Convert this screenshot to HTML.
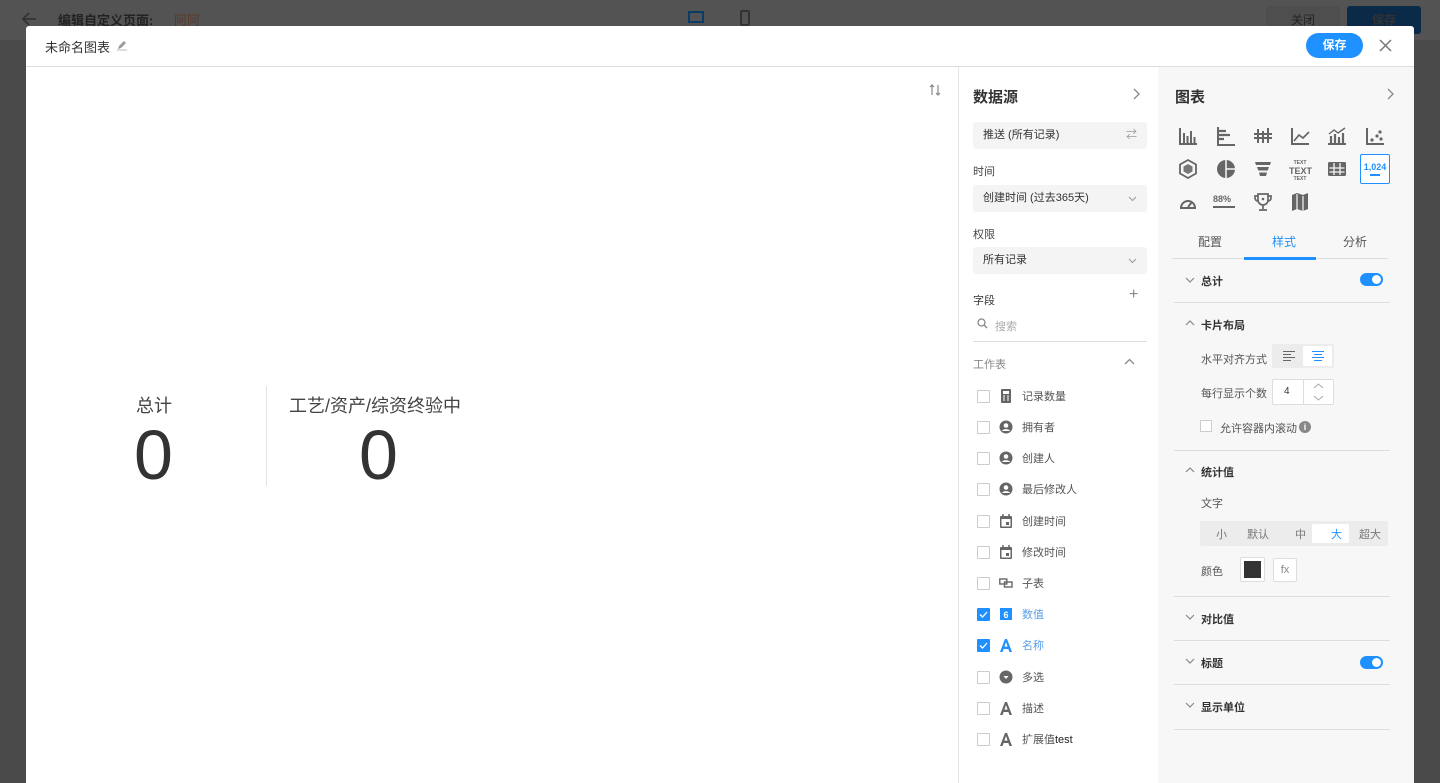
<!DOCTYPE html>
<html><head><meta charset="utf-8"><style>
*{box-sizing:border-box;margin:0;padding:0}
body{width:1440px;height:783px;overflow:hidden;background:#4a4a4a;font-family:"Liberation Sans","Noto Sans CJK SC",sans-serif;position:relative;color:#333}
.topbar{position:absolute;left:0;top:0;width:1440px;height:40px;background:#535353}
.abs{position:absolute}
.modal{position:absolute;left:26px;top:26px;width:1388px;height:757px;background:#fff;border-radius:3px 3px 0 0}
.hdr{position:absolute;left:0;top:0;width:1388px;height:41px;border-bottom:1px solid #ddd}
.ds{position:absolute;left:932px;top:41px;width:200px;height:716px;border-left:1px solid #e6e6e6;background:#fff}
.rp{position:absolute;left:1132px;top:41px;width:256px;height:716px;background:#f7f7f7}
.sel{position:absolute;left:14px;width:174px;height:27px;background:#f4f4f4;border-radius:3px;font-size:11px;line-height:27px;padding-left:10px;color:#333}
.lbl{position:absolute;left:14px;font-size:11px;color:#444}
.row{position:absolute;left:18px;height:16px;font-size:11px;color:#555;line-height:14px}
.cb{position:absolute;left:0;top:0;width:13px;height:13px;border:1px solid #ccc;background:#fff;border-radius:1px}
.cb.on{background:#1e90ff;border-color:#1e90ff}
.ic{position:absolute;left:22px;top:-1px;width:14px;height:14px}
.tx{position:absolute;left:45px;top:0;white-space:nowrap}
.sec{position:absolute;left:16px;width:216px;border-top:1px solid #ddd}
.st{position:absolute;left:43px;font-size:11px;color:#333;font-weight:bold}
.chev{position:absolute;left:27px;width:10px;height:10px}
.tog{position:absolute;left:202px;width:23px;height:13px;border-radius:7px;background:#1e90ff}
.tog::after{content:"";position:absolute;right:2px;top:2px;width:9px;height:9px;border-radius:50%;background:#fff}
.gi{position:absolute;width:22px;height:22px}
</style></head><body>
<div class="topbar"></div>
<svg class="abs" style="left:20px;top:10px" width="18" height="18" viewBox="0 0 18 18"><path d="M16 9H3M9 3L3 9l6 6" stroke="#333" stroke-width="1.8" fill="none"/></svg>
<div class="abs" style="left:58px;top:10px;font-size:13px;color:#222;font-weight:bold">编辑自定义页面:</div>
<div class="abs" style="left:174px;top:10px;font-size:13px;color:#5a3a2a">阿阿</div>
<div class="abs" style="left:1266px;top:6px;width:74px;height:28px;background:#4e4e4e;border-radius:3px;color:#222;font-size:12px;text-align:center;line-height:28px">关闭</div>
<div class="abs" style="left:1347px;top:6px;width:74px;height:28px;background:#0b2a48;border-radius:3px;color:#333;font-size:12px;text-align:center;line-height:28px;font-weight:bold">保存</div>
<div class="abs" style="left:688px;top:11px;width:16px;height:12px;border:2px solid #0a3a66"></div>
<div class="abs" style="left:740px;top:10px;width:10px;height:16px;border:2px solid #333;border-radius:2px"></div>

<div class="modal">
 <div class="hdr">
  <div class="abs" style="left:19px;top:11px;font-size:13px;color:#333">未命名图表</div>
  <svg class="abs" style="left:90px;top:13px" width="12" height="12" viewBox="0 0 12 12"><path d="M2 10l1-3 5-5 2 2-5 5z" fill="#999"/><path d="M1 11h10" stroke="#bbb"/></svg>
  <div class="abs" style="left:1280px;top:7px;width:57px;height:25px;border-radius:13px;background:#1e90ff;color:#fff;font-size:12px;font-weight:bold;text-align:center;line-height:25px">保存</div>
  <svg class="abs" style="left:1353px;top:13px" width="13" height="13" viewBox="0 0 13 13"><path d="M1 1l11 11M12 1L1 12" stroke="#777" stroke-width="1.5"/></svg>
 </div>
 <svg class="abs" style="left:903px;top:57px" width="12" height="14" viewBox="0 0 12 14"><path d="M3 12V2M1 4l2-2 2 2M9 2v10M7 10l2 2 2-2" stroke="#888" stroke-width="1.2" fill="none"/></svg>
 <div class="abs" style="left:110px;top:366px;font-size:18px;color:#444">总计</div>
 <div class="abs" style="left:108px;top:384px;font-size:70px;color:#333;line-height:90px;font-weight:300">0</div>
 <div class="abs" style="left:240px;top:360px;width:1px;height:100px;background:#e2e2e2"></div>
 <div class="abs" style="left:263px;top:366px;font-size:18px;color:#444">工艺/资产/综资终验中</div>
 <div class="abs" style="left:333px;top:384px;font-size:70px;color:#333;line-height:90px">0</div>

 <div class="ds">
  <div class="abs" style="left:14px;top:19px;font-size:15px;color:#333;font-weight:bold">数据源</div>
  <svg class="abs" style="left:174px;top:21px" width="8" height="12" viewBox="0 0 8 12"><path d="M1 1l5 5-5 5" stroke="#888" stroke-width="1.3" fill="none"/></svg>
  <div class="sel" style="top:55px">推送 (所有记录)<span style="position:absolute;right:10px;color:#999">⇄</span></div>
  <div class="lbl" style="top:96px">时间</div>
  <div class="sel" style="top:118px">创建时间 (过去365天)<svg style="position:absolute;right:10px;top:11px" width="9" height="6" viewBox="0 0 9 6"><path d="M1 1l3.5 3.5L8 1" stroke="#999" fill="none"/></svg></div>
  <div class="lbl" style="top:159px">权限</div>
  <div class="sel" style="top:180px">所有记录<svg style="position:absolute;right:10px;top:11px" width="9" height="6" viewBox="0 0 9 6"><path d="M1 1l3.5 3.5L8 1" stroke="#999" fill="none"/></svg></div>
  <div class="lbl" style="top:225px;color:#333">字段</div>
  <div class="abs" style="left:170px;top:219px;font-size:16px;color:#888">+</div>
  <svg class="abs" style="left:18px;top:251px" width="11" height="11" viewBox="0 0 11 11"><circle cx="4.5" cy="4.5" r="3.5" stroke="#888" fill="none" stroke-width="1.3"/><path d="M7 7l3 3" stroke="#888" stroke-width="1.4"/></svg>
  <div class="abs" style="left:36px;top:251px;font-size:11px;color:#aaa">搜索</div>
  <div class="abs" style="left:14px;top:274px;width:174px;height:1px;background:#ddd"></div>
  <div class="abs" style="left:14px;top:289px;font-size:11px;color:#888">工作表</div>
  <svg class="abs" style="left:165px;top:291px" width="11" height="7" viewBox="0 0 11 7"><path d="M1 6l4.5-4.5L10 6" stroke="#888" stroke-width="1.3" fill="none"/></svg>

  <div class="row" style="top:323px"><div class="cb"></div><svg class="ic" viewBox="0 0 14 14"><rect x="2" y="0" width="10" height="14" rx="1" fill="#666"/><rect x="4" y="2" width="6" height="3" fill="#fff"/><path d="M4 7h2M8 7h2M4 9h2M8 9h2M4 11h2M8 11h2" stroke="#fff"/></svg><div class="tx">记录数量</div></div>
  <div class="row" style="top:354px"><div class="cb"></div><svg class="ic" viewBox="0 0 14 14"><circle cx="7" cy="7" r="6.5" fill="#666"/><circle cx="7" cy="5.5" r="2.3" fill="#fff"/><path d="M3 11c1-2.5 7-2.5 8 0" fill="#fff"/></svg><div class="tx">拥有者</div></div>
  <div class="row" style="top:385px"><div class="cb"></div><svg class="ic" viewBox="0 0 14 14"><circle cx="7" cy="7" r="6.5" fill="#666"/><circle cx="7" cy="5.5" r="2.3" fill="#fff"/><path d="M3 11c1-2.5 7-2.5 8 0" fill="#fff"/></svg><div class="tx">创建人</div></div>
  <div class="row" style="top:416px"><div class="cb"></div><svg class="ic" viewBox="0 0 14 14"><circle cx="7" cy="7" r="6.5" fill="#666"/><circle cx="7" cy="5.5" r="2.3" fill="#fff"/><path d="M3 11c1-2.5 7-2.5 8 0" fill="#fff"/></svg><div class="tx">最后修改人</div></div>
  <div class="row" style="top:448px"><div class="cb"></div><svg class="ic" viewBox="0 0 14 14"><rect x="1" y="2" width="12" height="12" rx="1" fill="#666"/><rect x="2.5" y="5" width="9" height="7.5" fill="#fff"/><rect x="7" y="8" width="3" height="3" fill="#666"/><path d="M4 0v3M10 0v3" stroke="#666" stroke-width="1.5"/></svg><div class="tx">创建时间</div></div>
  <div class="row" style="top:479px"><div class="cb"></div><svg class="ic" viewBox="0 0 14 14"><rect x="1" y="2" width="12" height="12" rx="1" fill="#666"/><rect x="2.5" y="5" width="9" height="7.5" fill="#fff"/><rect x="7" y="8" width="3" height="3" fill="#666"/><path d="M4 0v3M10 0v3" stroke="#666" stroke-width="1.5"/></svg><div class="tx">修改时间</div></div>
  <div class="row" style="top:510px"><div class="cb"></div><svg class="ic" viewBox="0 0 14 14"><rect x="0.8" y="3" width="7" height="5" stroke="#666" stroke-width="1.4" fill="none"/><rect x="5.5" y="6" width="7.5" height="5" stroke="#666" stroke-width="1.4" fill="none"/></svg><div class="tx">子表</div></div>
  <div class="row" style="top:541px;color:#5aa0e8"><div class="cb on"><svg width="11" height="11" viewBox="0 0 11 11"><path d="M2 5.5l2.5 2.5L9 3" stroke="#fff" fill="none" stroke-width="1.3"/></svg></div><svg class="ic" viewBox="0 0 14 14"><rect x="1" y="1" width="12" height="12" fill="#1e90ff"/><text x="7" y="11" font-size="9" font-weight="bold" fill="#fff" text-anchor="middle" font-family="Liberation Sans">6</text></svg><div class="tx">数值</div></div>
  <div class="row" style="top:572px;color:#5aa0e8"><div class="cb on"><svg width="11" height="11" viewBox="0 0 11 11"><path d="M2 5.5l2.5 2.5L9 3" stroke="#fff" fill="none" stroke-width="1.3"/></svg></div><svg class="ic" viewBox="0 0 14 14"><path d="M1 14L6 1h2l5 13h-2.6l-1-3H4.6l-1 3zM5.4 8.6h3.2L7 4z" fill="#1e90ff"/></svg><div class="tx">名称</div></div>
  <div class="row" style="top:604px"><div class="cb"></div><svg class="ic" viewBox="0 0 14 14"><circle cx="7" cy="7" r="6.5" fill="#666"/><path d="M4.5 6h5L7 9z" fill="#fff"/></svg><div class="tx">多选</div></div>
  <div class="row" style="top:635px"><div class="cb"></div><svg class="ic" viewBox="0 0 14 14"><path d="M1 14L6 1h2l5 13h-2.6l-1-3H4.6l-1 3zM5.4 8.6h3.2L7 4z" fill="#666"/></svg><div class="tx">描述</div></div>
  <div class="row" style="top:666px"><div class="cb"></div><svg class="ic" viewBox="0 0 14 14"><path d="M1 14L6 1h2l5 13h-2.6l-1-3H4.6l-1 3zM5.4 8.6h3.2L7 4z" fill="#666"/></svg><div class="tx">扩展值<span style="color:#222">test</span></div></div>
 </div>

 <div class="rp">
  <div class="abs" style="left:17px;top:19px;font-size:15px;color:#333;font-weight:bold">图表</div>
  <svg class="abs" style="left:229px;top:21px" width="8" height="12" viewBox="0 0 8 12"><path d="M1 1l5 5-5 5" stroke="#888" stroke-width="1.3" fill="none"/></svg>
  <svg class="gi" style="left:19px;top:58px" viewBox="0 0 22 22"><path d="M3 3v16h17" stroke="#666" stroke-width="2" fill="none"/><path d="M7 8v10M10.5 11v7M14 6v12M17.5 12v6" stroke="#666" stroke-width="2"/></svg>
  <svg class="gi" style="left:57px;top:58px" viewBox="0 0 22 22"><path d="M3 2v18h17" stroke="#666" stroke-width="2" fill="none"/><path d="M3 6h8M3 10h12M3 14h6" stroke="#666" stroke-width="2.2"/></svg>
  <svg class="gi" style="left:94px;top:58px" viewBox="0 0 22 22"><path d="M2 9h18M2 13h18" stroke="#666" stroke-width="2"/><path d="M6 4v14M11 6v12M16 3v15" stroke="#666" stroke-width="2"/></svg>
  <svg class="gi" style="left:131px;top:58px" viewBox="0 0 22 22"><path d="M3 3v16h17" stroke="#666" stroke-width="2" fill="none"/><path d="M5 16l5-6 4 3 6-6" stroke="#666" stroke-width="1.7" fill="none"/></svg>
  <svg class="gi" style="left:168px;top:58px" viewBox="0 0 22 22"><path d="M2 19h18" stroke="#666" stroke-width="2"/><path d="M5 11v7M9 9v9M13 12v6M17 8v10" stroke="#666" stroke-width="2.2"/><path d="M3 9l5-4 4 3 7-5" stroke="#666" stroke-width="1.4" fill="none"/></svg>
  <svg class="gi" style="left:206px;top:58px" viewBox="0 0 22 22"><path d="M3 3v16h17" stroke="#666" stroke-width="2" fill="none"/><circle cx="8" cy="15" r="1.6" fill="#666"/><circle cx="13" cy="11" r="1.6" fill="#666"/><circle cx="17" cy="14" r="1.6" fill="#666"/><circle cx="16" cy="7" r="1.6" fill="#666"/></svg>
  <svg class="gi" style="left:19px;top:91px" viewBox="0 0 22 22"><path d="M11 2l8 4.5v9L11 20l-8-4.5v-9z" stroke="#666" stroke-width="1.8" fill="none"/><path d="M11 6l4.5 2.5v5L11 16l-4.5-2.5v-5z" fill="#777"/></svg>
  <svg class="gi" style="left:57px;top:91px" viewBox="0 0 22 22"><circle cx="11" cy="11" r="9" fill="#666"/><path d="M11 1v20M11 11h10" stroke="#f7f7f7" stroke-width="1.5"/></svg>
  <svg class="gi" style="left:94px;top:91px" viewBox="0 0 22 22"><path d="M3 4h16l-1 3H4zM5 9h12l-1.3 3.5H6.3zM7 14.5h8l-1 3.5H8z" fill="#666"/></svg>
  <div class="abs" style="left:131px;top:93px;width:22px;text-align:center;font-family:'Liberation Sans';font-weight:bold;color:#666;line-height:7px"><div style="font-size:5px">TEXT</div><div style="font-size:9px;line-height:9px">TEXT</div><div style="font-size:5px">TEXT</div></div>
  <svg class="gi" style="left:168px;top:91px" viewBox="0 0 22 22"><rect x="2" y="4" width="18" height="14" rx="1.5" fill="#666"/><path d="M3.5 10h15M3.5 14h15M8 5v12M14 5v12" stroke="#f7f7f7" stroke-width="1.3"/></svg>
  <div class="abs" style="left:202px;top:87px;width:30px;height:30px;border:1px solid #1e90ff;border-radius:2px;background:#fff;text-align:center;color:#1e90ff;font-size:9px;font-weight:bold;padding-top:7px;line-height:10px">1,024<div style="width:10px;height:1.5px;background:#1e90ff;margin:2px auto 0"></div></div>
  <svg class="gi" style="left:19px;top:124px" viewBox="0 0 22 22"><path d="M4 17a7 7 0 1 1 14 0z" stroke="#666" stroke-width="2" fill="none"/><path d="M11 16l4-5" stroke="#666" stroke-width="2"/></svg>
  <div class="abs" style="left:55px;top:128px;width:24px;font-size:9px;font-weight:bold;color:#666;line-height:9px">88%<div style="width:22px;height:1.5px;background:#666;margin-top:2px"></div></div>
  <svg class="gi" style="left:94px;top:124px" viewBox="0 0 22 22"><path d="M6 3h10v6a5 5 0 0 1-10 0zM6 5H3v2a3 3 0 0 0 3 3M16 5h3v2a3 3 0 0 1-3 3M11 14v4M7 19h8" stroke="#666" stroke-width="1.7" fill="none"/><circle cx="11" cy="8" r="1.3" fill="#666"/></svg>
  <svg class="gi" style="left:131px;top:124px" viewBox="0 0 22 22"><path d="M3 4l5-2 6 2 5-2v16l-5 2-6-2-5 2z" fill="#666"/><path d="M8 3v16M14 5v16" stroke="#f7f7f7" stroke-width="1.2"/></svg>

  <div class="abs" style="left:40px;top:166px;font-size:12px;color:#555">配置</div>
  <div class="abs" style="left:114px;top:166px;font-size:12px;color:#1e90ff">样式</div>
  <div class="abs" style="left:185px;top:166px;font-size:12px;color:#555">分析</div>
  <div class="abs" style="left:14px;top:191px;width:216px;height:1px;background:#ddd"></div>
  <div class="abs" style="left:86px;top:190px;width:72px;height:3px;background:#1e90ff"></div>

  <svg class="chev" style="top:208px" viewBox="0 0 10 10"><path d="M1 3l4 4 4-4" stroke="#888" stroke-width="1.2" fill="none"/></svg>
  <div class="st" style="top:206px">总计</div>
  <div class="tog" style="top:206px"></div>
  <div class="sec" style="top:235px"></div>
  <svg class="chev" style="top:251px" viewBox="0 0 10 10"><path d="M1 7l4-4 4 4" stroke="#888" stroke-width="1.2" fill="none"/></svg>
  <div class="st" style="top:250px">卡片布局</div>
  <div class="abs" style="left:43px;top:284px;font-size:11px;color:#555">水平对齐方式</div>
  <div class="abs" style="left:114px;top:277px;width:62px;height:24px;background:#ececec;border-radius:2px"></div>
  <div class="abs" style="left:145px;top:279px;width:29px;height:20px;background:#fff;border-radius:2px"></div>
  <svg class="abs" style="left:125px;top:284px" width="12" height="10" viewBox="0 0 12 10"><path d="M0 .5h12M0 3.5h8M0 6.5h12M0 9.5h8" stroke="#666"/></svg>
  <svg class="abs" style="left:154px;top:284px" width="12" height="10" viewBox="0 0 12 10"><path d="M0 .5h12M2 3.5h8M0 6.5h12M2 9.5h8" stroke="#1e90ff"/></svg>
  <div class="abs" style="left:43px;top:318px;font-size:11px;color:#555">每行显示个数</div>
  <div class="abs" style="left:114px;top:312px;width:62px;height:26px;background:#fff;border:1px solid #ddd;border-radius:2px;font-size:10px;line-height:24px;padding-left:11px">4</div>
  <div class="abs" style="left:145px;top:313px;width:1px;height:24px;background:#ddd"></div>
  <svg class="abs" style="left:155px;top:316px" width="11" height="18" viewBox="0 0 11 18"><path d="M1 5l4.5-4 4.5 4M1 13l4.5 4 4.5-4" stroke="#aaa" fill="none"/></svg>
  <div class="abs" style="left:42px;top:353px;width:12px;height:12px;border:1px solid #ccc;background:#fff"></div>
  <div class="abs" style="left:62px;top:353px;font-size:11px;color:#555">允许容器内滚动</div>
  <div class="abs" style="left:141px;top:354px;width:12px;height:12px;border-radius:50%;background:#888;color:#fff;font-size:9px;text-align:center;line-height:12px;font-weight:bold">i</div>
  <div class="sec" style="top:383px"></div>
  <svg class="chev" style="top:398px" viewBox="0 0 10 10"><path d="M1 7l4-4 4 4" stroke="#888" stroke-width="1.2" fill="none"/></svg>
  <div class="st" style="top:397px">统计值</div>
  <div class="abs" style="left:43px;top:428px;font-size:11px;color:#555">文字</div>
  <div class="abs" style="left:42px;top:454px;width:188px;height:25px;background:#ececec;border-radius:2px"></div>
  <div class="abs" style="left:154px;top:457px;width:37px;height:19px;background:#fff;border-radius:2px"></div>
  <div class="abs" style="left:42px;top:459px;width:188px;font-size:11px;color:#777">
   <span style="position:absolute;left:16px">小</span><span style="position:absolute;left:47px">默认</span><span style="position:absolute;left:95px">中</span><span style="position:absolute;left:131px;color:#1e90ff">大</span><span style="position:absolute;left:159px">超大</span></div>
  <div class="abs" style="left:43px;top:496px;font-size:11px;color:#555">颜色</div>
  <div class="abs" style="left:82px;top:490px;width:25px;height:25px;border:1px solid #ddd;background:#fff;border-radius:2px;padding:3px"><div style="width:17px;height:17px;background:#333"></div></div>
  <div class="abs" style="left:115px;top:491px;width:24px;height:24px;border:1px solid #ddd;background:#fff;border-radius:2px;font-size:11px;color:#888;text-align:center;line-height:22px">fx</div>
  <div class="sec" style="top:529px"></div>
  <svg class="chev" style="top:545px" viewBox="0 0 10 10"><path d="M1 3l4 4 4-4" stroke="#888" stroke-width="1.2" fill="none"/></svg>
  <div class="st" style="top:544px">对比值</div>
  <div class="sec" style="top:573px"></div>
  <svg class="chev" style="top:589px" viewBox="0 0 10 10"><path d="M1 3l4 4 4-4" stroke="#888" stroke-width="1.2" fill="none"/></svg>
  <div class="st" style="top:588px">标题</div>
  <div class="tog" style="top:589px"></div>
  <div class="sec" style="top:617px"></div>
  <svg class="chev" style="top:633px" viewBox="0 0 10 10"><path d="M1 3l4 4 4-4" stroke="#888" stroke-width="1.2" fill="none"/></svg>
  <div class="st" style="top:632px">显示单位</div>
  <div class="sec" style="top:662px"></div>
 </div>
</div>
</body></html>
